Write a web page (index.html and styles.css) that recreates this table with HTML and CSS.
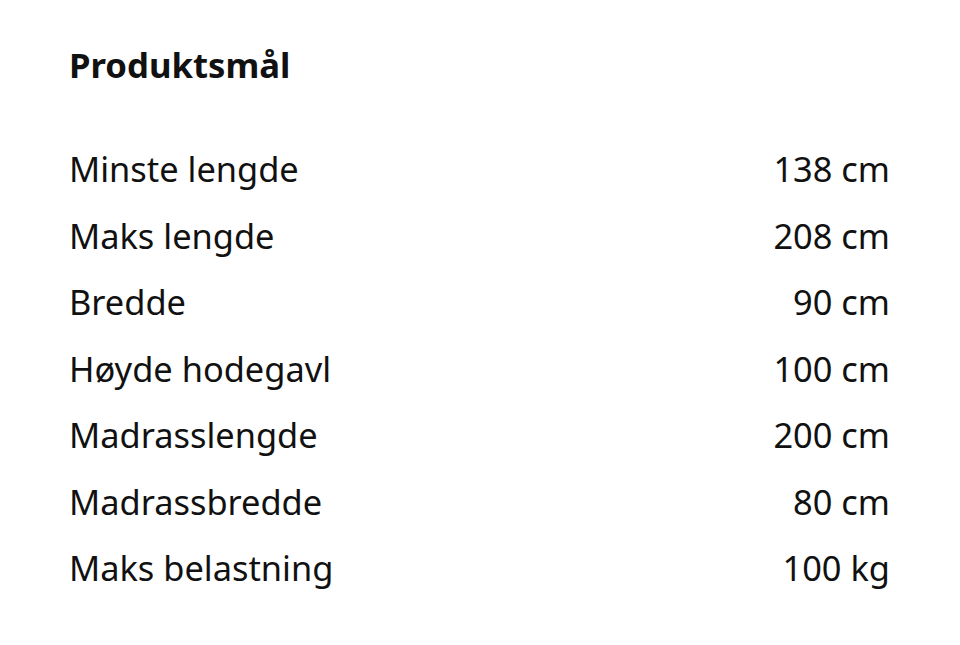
FILE: index.html
```html
<!DOCTYPE html>
<html lang="no">
<head>
<meta charset="utf-8">
<link rel="stylesheet" href="styles.css">
</head>
<body>
<section class="dims">
  <h2 class="dims-title">Produktsmål</h2>
  <dl class="dims-list">
    <div class="dims-row"><dt>Minste lengde</dt><dd>138 cm</dd></div>
    <div class="dims-row"><dt>Maks lengde</dt><dd>208 cm</dd></div>
    <div class="dims-row"><dt>Bredde</dt><dd>90 cm</dd></div>
    <div class="dims-row"><dt>Høyde hodegavl</dt><dd>100 cm</dd></div>
    <div class="dims-row"><dt>Madrasslengde</dt><dd>200 cm</dd></div>
    <div class="dims-row"><dt>Madrassbredde</dt><dd>80 cm</dd></div>
    <div class="dims-row"><dt>Maks belastning</dt><dd>100 kg</dd></div>
  </dl>
</section>
</body>
</html>
```

FILE: styles.css
```css
html, body {
  margin: 0;
  padding: 0;
  background: #fff;
}
body {
  font-family: "Noto Sans", "Open Sans", sans-serif;
  color: #111111;
}
.dims {
  width: 821px;
  padding: 41px 0 0 69px;
}
.dims-title {
  margin: 0;
  font-size: 34.7px;
  font-weight: 700;
  line-height: 47px;
}
.dims-list {
  margin: 48px 0 0 0;
  padding: 0;
}
.dims-row {
  display: flex;
  justify-content: space-between;
  font-size: 34.4px;
  line-height: 66.5px;
}
.dims-row dt,
.dims-row dd {
  margin: 0;
}
```
